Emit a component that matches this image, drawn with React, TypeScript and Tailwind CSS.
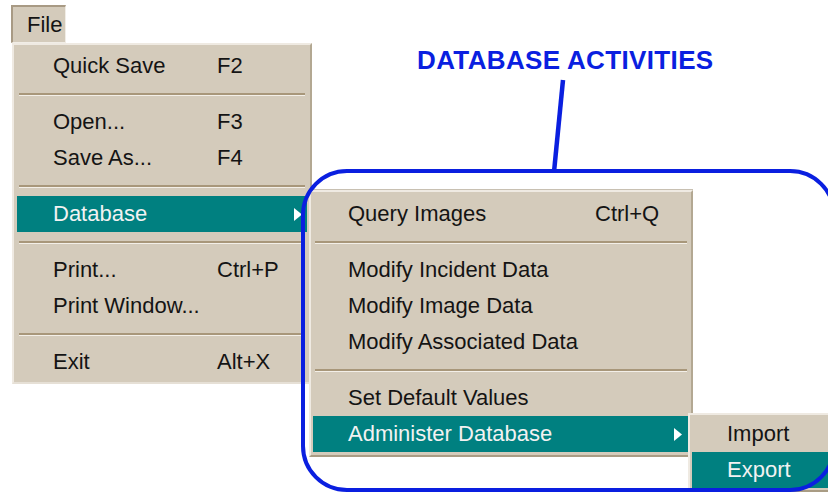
import React from "react";

const BLUE = "#0a1fe0";

type Row =
  | { kind: "item"; label: string; key?: string; active?: boolean; sub?: boolean }
  | { kind: "sep" };

const MAIN: Row[] = [
  { kind: "item", label: "Quick Save", key: "F2" },
  { kind: "sep" },
  { kind: "item", label: "Open...", key: "F3" },
  { kind: "item", label: "Save As...", key: "F4" },
  { kind: "sep" },
  { kind: "item", label: "Database", active: true, sub: true },
  { kind: "sep" },
  { kind: "item", label: "Print...", key: "Ctrl+P" },
  { kind: "item", label: "Print Window..." },
  { kind: "sep" },
  { kind: "item", label: "Exit", key: "Alt+X" },
];

const DB: Row[] = [
  { kind: "item", label: "Query Images", key: "Ctrl+Q" },
  { kind: "sep" },
  { kind: "item", label: "Modify Incident Data" },
  { kind: "item", label: "Modify Image Data" },
  { kind: "item", label: "Modify Associated Data" },
  { kind: "sep" },
  { kind: "item", label: "Set Default Values" },
  { kind: "item", label: "Administer Database", active: true, sub: true },
];

const ADMIN: Row[] = [
  { kind: "item", label: "Import" },
  { kind: "item", label: "Export", active: true },
];

function Arrow() {
  return (
    <svg width="8" height="13" viewBox="0 0 8 13" className="shrink-0">
      <path d="M0 0 L8 6.5 L0 13 Z" fill="#ffffff" />
    </svg>
  );
}

function MenuRows({ rows, indent, labelW, arrowGap }: { rows: Row[]; indent: number; labelW: number; arrowGap: number }) {
  return (
    <>
      {rows.map((r, i) =>
        r.kind === "sep" ? (
          <div key={i} className="h-5 flex flex-col justify-center px-[2px]">
            <div className="h-[2px] bg-[#a8977a]" />
            <div className="h-[1px] bg-[#f3efe8]" />
          </div>
        ) : (
          <div
            key={i}
            className={`h-9 flex items-center text-[22px] leading-none ${
              r.active ? "bg-[#008080] text-[#f2f2f2]" : "text-[#141414]"
            }`}
            style={{ paddingLeft: indent }}
          >
            <span className="shrink-0 whitespace-nowrap" style={{ width: labelW }}>
              {r.label}
            </span>
            {r.key && <span className="whitespace-nowrap">{r.key}</span>}
            {r.sub && (
              <span className="ml-auto flex" style={{ marginRight: arrowGap }}>
                <Arrow />
              </span>
            )}
          </div>
        )
      )}
    </>
  );
}

export default function App() {
  return (
    <div className="relative w-[828px] h-[493px] bg-white overflow-hidden font-['Liberation_Sans',Arial,sans-serif]">
      {/* menu bar button */}
      <div className="absolute left-[11px] top-[5px] w-[55px] h-[38px] bg-[#d4cbbb] border-t-2 border-l-2 border-[#a89a84] border-b border-r border-b-[#f1ede6] border-r-[#f1ede6] flex items-center pl-[14px] text-[22px] text-[#141414]">
        File
      </div>

      {/* main menu */}
      <div className="absolute left-[12px] top-[43px] w-[300px] h-[341px] bg-[#d4cbbb] border-2 border-t-[#efeae2] border-l-[#efeae2] border-b-[#e6e0d6] border-r-[#b3a892] pt-[3px] px-[3px]">
        <MenuRows rows={MAIN} indent={36} labelW={164} arrowGap={5} />
      </div>

      {/* database submenu */}
      <div className="absolute left-[309px] top-[190px] w-[384px] h-[267px] bg-[#d4cbbb] border-2 border-t-[#efeae2] border-l-[#efeae2] border-b-[#a99c84] border-r-[#b3a892] pt-[4px] px-[2px] shadow-[0_-1px_0_#c8c0b2]">
        <MenuRows rows={DB} indent={35} labelW={247} arrowGap={7} />
      </div>

      {/* administer submenu */}
      <div className="absolute left-[688px] top-[413px] w-[150px] h-[79px] bg-[#d4cbbb] border-2 border-t-[#efeae2] border-l-[#efeae2] border-b-[#a99c84] border-r-[#b3a892] pt-[1px] px-[2px]">
        <MenuRows rows={ADMIN} indent={35} labelW={100} arrowGap={0} />
      </div>

      {/* annotation */}
      <div className="absolute left-[417px] top-[44px] text-[26px] tracking-[0.35px] font-bold leading-8 text-[#0a1fe0] whitespace-nowrap">
        DATABASE ACTIVITIES
      </div>
      <svg className="absolute left-[548px] top-[78px] pointer-events-none" width="20" height="96" viewBox="0 0 20 96">
        <line x1="15" y1="2" x2="6" y2="94" stroke={BLUE} strokeWidth="4.5" />
      </svg>
      <div className="absolute left-[301px] top-[169px] w-[535px] h-[323px] rounded-[46px] border-[4.5px] border-[#0a1fe0] pointer-events-none" />
    </div>
  );
}
